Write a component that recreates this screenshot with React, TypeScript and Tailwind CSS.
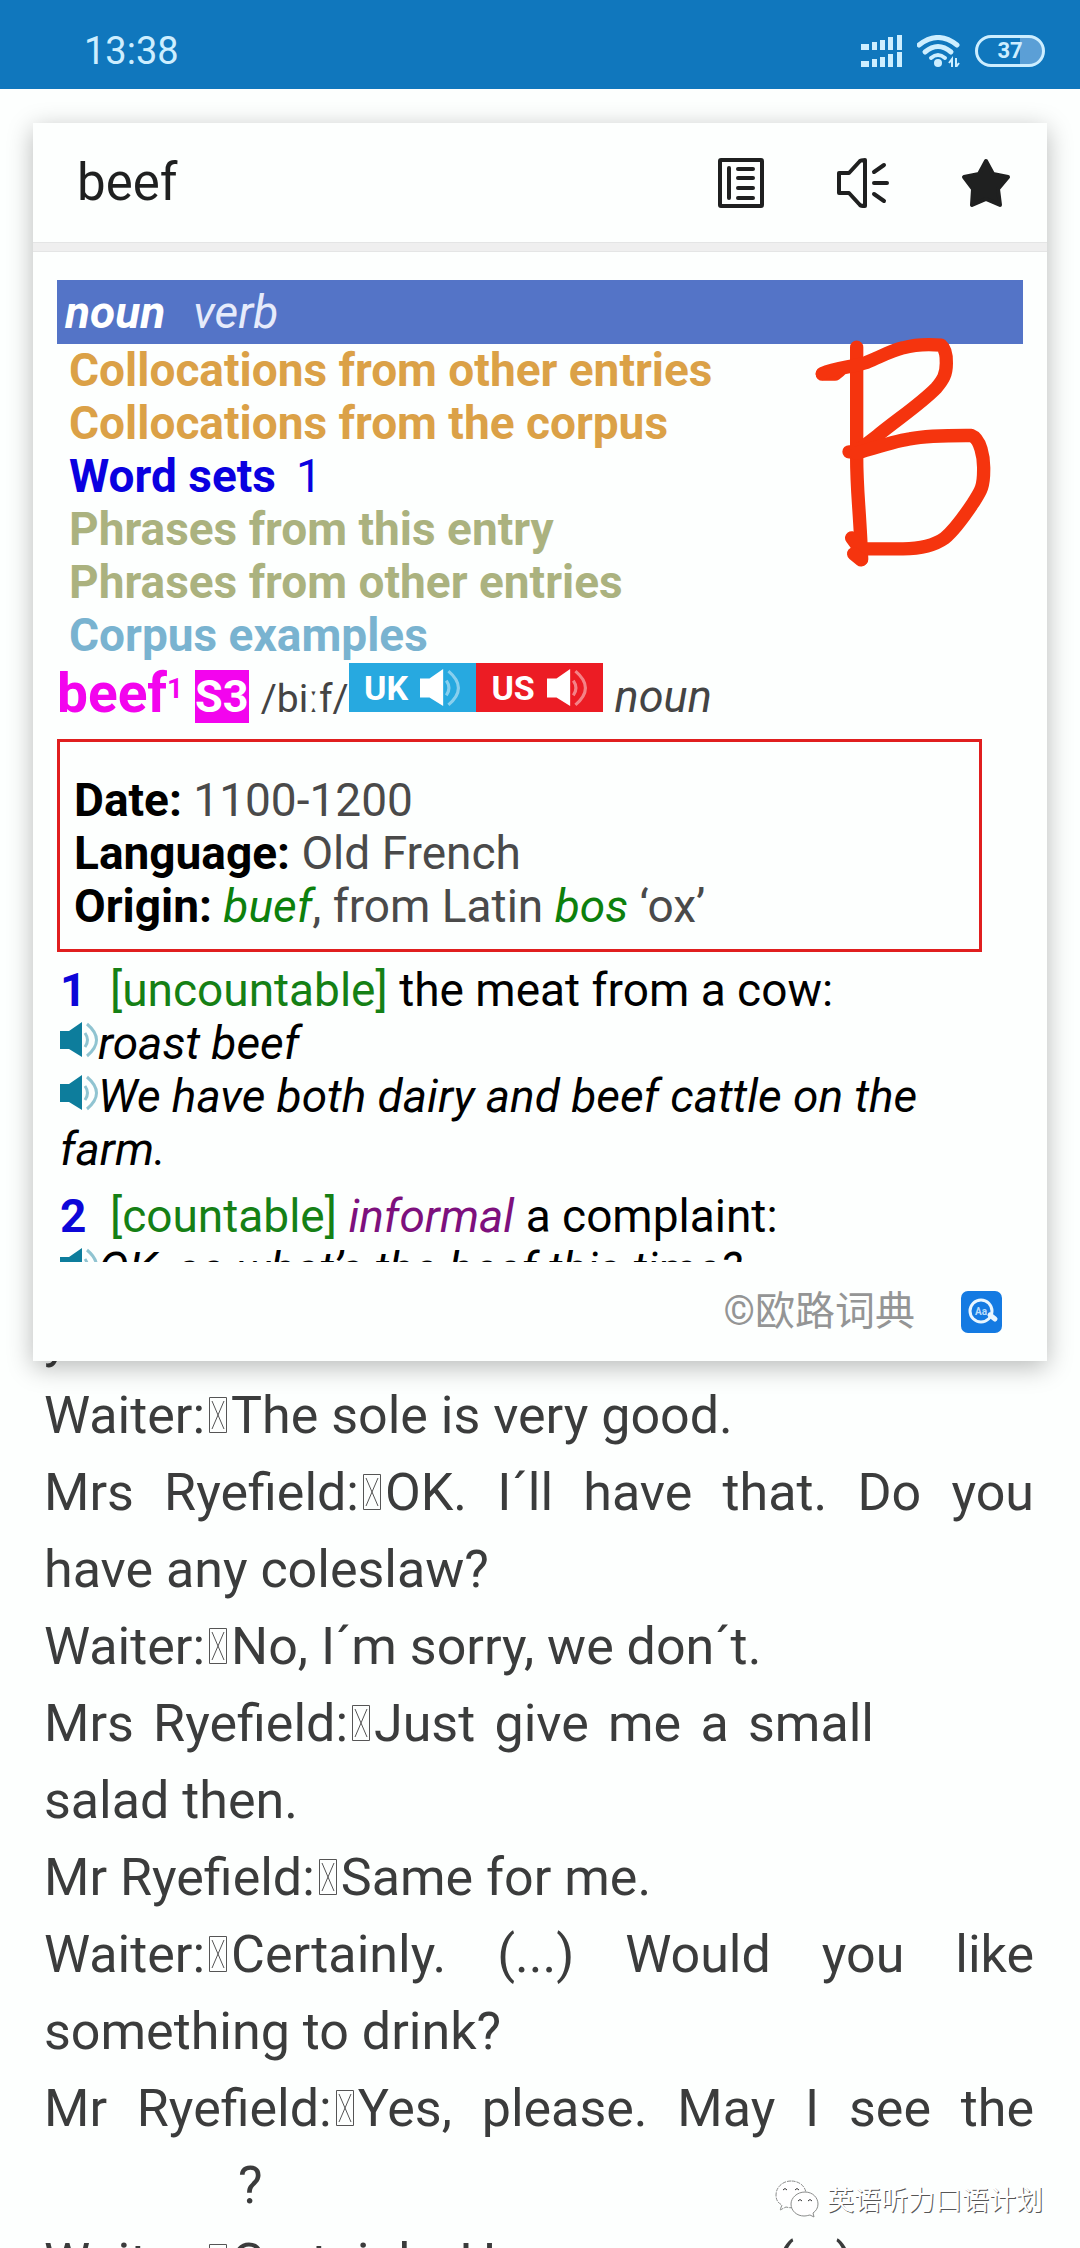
import type { ReactNode } from "react";

// ── Data ─────────────────────────────────────────────
const SECTION_LINKS = [
  { label: "Collocations from other entries", color: "text-[#dba147]" },
  { label: "Collocations from the corpus", color: "text-[#dba147]" },
  { label: "Word sets", color: "text-[#0a00e0]", count: 1 },
  { label: "Phrases from this entry", color: "text-[#abb27f]" },
  { label: "Phrases from other entries", color: "text-[#abb27f]" },
  { label: "Corpus examples", color: "text-[#79b3d0]" },
];

interface Line {
  speaker?: string;
  text: string;
  justify?: "full" | "short";
}

const DIALOGUE: Line[] = [
  { text: "y" },
  { speaker: "Waiter:", text: "The sole is very good." },
  { speaker: "Mrs Ryefield:", text: "OK. I´ll have that. Do you", justify: "full" },
  { text: "have any coleslaw?" },
  { speaker: "Waiter:", text: "No, I´m sorry, we don´t." },
  { speaker: "Mrs Ryefield:", text: "Just give me a small", justify: "short" },
  { text: "salad then." },
  { speaker: "Mr Ryefield:", text: "Same for me." },
  { speaker: "Waiter:", text: "Certainly. (...) Would you like", justify: "full" },
  { text: "something to drink?" },
  { speaker: "Mr Ryefield:", text: "Yes, please. May I see the", justify: "full" },
];

// ── Icons ────────────────────────────────────────────
function SignalIcon() {
  const bars = [
    { x: 0, w: 8, h: 6 },
    { x: 11, w: 5, h: 8 },
    { x: 19, w: 5, h: 10 },
    { x: 27, w: 5, h: 13 },
    { x: 36, w: 5, h: 15 },
  ];
  return (
    <svg className="h-8 w-[41px]" viewBox="0 0 41 32" fill="currentColor">
      {bars.map((b) => (
        <g key={b.x}>
          <rect x={b.x} y={15 - b.h} width={b.w} height={b.h} />
          <rect x={b.x} y={32 - b.h} width={b.w} height={b.h} />
        </g>
      ))}
    </svg>
  );
}

function WifiIcon() {
  return (
    <svg className="h-8 w-[43px]" viewBox="0 0 43 32" fill="none" stroke="currentColor">
      <path d="M2 10 Q21 -5 40 10" strokeWidth="5" strokeLinecap="round" />
      <path d="M8 17 Q21 6 34 17" strokeWidth="5" strokeLinecap="round" />
      <path d="M14 23 Q21 17 28 23" strokeWidth="4" strokeLinecap="round" />
      <circle cx="21" cy="28" r="4" fill="currentColor" stroke="none" />
      <path d="M35 33 V24 L32 28 M39 23 V32 L42 28" strokeWidth="2" />
    </svg>
  );
}

function BookIcon() {
  return (
    <svg className="h-[50px] w-[46px]" viewBox="0 0 46 50" fill="none" stroke="currentColor">
      <rect x="2" y="2" width="42" height="46" rx="1" strokeWidth="4" />
      <path d="M11 10 V40" strokeWidth="4" strokeLinecap="round" />
      <path
        d="M20 11 H35 M20 20 H35 M20 30 H35 M20 40 H35"
        strokeWidth="4"
        strokeLinecap="round"
      />
    </svg>
  );
}

function SpeakIcon() {
  return (
    <svg
      className="h-[50px] w-[53px]"
      viewBox="0 0 53 50"
      fill="none"
      stroke="currentColor"
      strokeWidth="4"
      strokeLinejoin="round"
      strokeLinecap="round"
    >
      <path d="M3 15 H13 L24 3 Q25 2 29 2 V48 Q25 48 24 47 L13 35 H3 Z" />
      <path d="M38 14 L48 7 M38 25 H51 M38 36 L48 43" />
    </svg>
  );
}

function StarIcon() {
  return (
    <svg
      className="h-[50px] w-[50px]"
      viewBox="0 0 50 50"
      fill="currentColor"
      stroke="currentColor"
      strokeWidth="4"
      strokeLinejoin="round"
    >
      <path d="M25 3 L32 16 L47 19 L37 31 L39 47 L25 41 L11 47 L12 31 L3 19 L18 16 Z" />
    </svg>
  );
}

function SoundIcon({ className }: { className: string }) {
  return (
    <svg className={className} viewBox="0 0 38 38">
      <path d="M0 10 H9 L22 1 V36 L9 28 H0 Z" fill="currentColor" />
      <g fill="none" stroke="currentColor" opacity="0.45">
        <path d="M25 12 Q30 19 25 26" strokeWidth="3" />
        <path d="M27 3 Q46 19 27 35" strokeWidth="3" />
      </g>
    </svg>
  );
}

function DictLogo() {
  return (
    <svg className="size-[42px]" viewBox="0 0 42 42">
      <rect width="41" height="42" rx="7" fill="#147ae2" />
      <circle cx="20" cy="20" r="11" fill="none" stroke="#e9f6ff" strokeWidth="3" />
      <path d="M29 24 L34 28" stroke="#e9f6ff" strokeWidth="5" strokeLinecap="round" />
      <text
        x="20"
        y="24"
        fontSize="10"
        fontWeight="700"
        fontFamily="Roboto, sans-serif"
        textAnchor="middle"
        fill="#b9dcfb"
      >
        Aa
      </text>
    </svg>
  );
}

function WechatIcon() {
  return (
    <svg
      className="h-[38px] w-[44px]"
      viewBox="0 0 44 38"
      fill="#fff"
      stroke="#8a8c8b"
      strokeWidth="1"
      strokeLinejoin="round"
    >
      <path
        d="M16 1 C8 1 1 7 1 15 C1 20 3 23 7 25 L5 30 L11 27 C15 28 17 28 19 27 L31 13 C30 5 23 1 16 1 Z"
        strokeDasharray="4 1"
      />
      <path d="M30 12 C22 12 16 18 16 24 C16 31 22 36 29 36 C32 36 34 35 35 35 L39 37 L38 33 C41 31 43 28 43 24 C43 18 38 12 30 12 Z" />
      <path
        d="M8 10 q2 -3 4 0 M20 10 q2 -3 4 0 M23 21 q2 -3 4 0 M33 21 q2 -3 4 0"
        fill="none"
        stroke="#333"
      />
    </svg>
  );
}

// Box shown where the ebook has a character the font lacks
function MissingGlyph() {
  return (
    <svg
      className="mx-1 inline-block h-9 w-[18px] align-baseline"
      viewBox="0 0 18 36"
      fill="none"
      stroke="#555"
      strokeWidth="1"
      aria-hidden="true"
    >
      <path d="M0.5 0.5 H17.5 V35.5 H0.5 Z M3 4 L15 32 M15 4 L3 32" />
    </svg>
  );
}

function Scribble() {
  return (
    <svg
      className="pointer-events-none absolute right-[54px] top-[210px] h-[237px] w-[180px]"
      viewBox="160 100 540 710"
      fill="none"
      stroke="#f5340e"
      strokeWidth="40"
      strokeLinecap="round"
      strokeLinejoin="round"
      aria-hidden="true"
    >
      <path d="M291 142 V470 C291 560 297 600 303 715 L306 778" />
      <path d="M188 223 H226 L240 212" />
      <path d="M188 221 C230 202 280 202 320 188 C360 172 395 152 430 144 C470 133 510 133 544 136 Q561 150 560 190 C560 225 550 240 530 264 C480 315 410 360 350 410 L290 456 H268" />
      <path d="M290 460 C340 445 400 425 450 417 C510 406 580 407 635 407 C662 417 673 470 672 510 C672 565 662 575 640 610 C610 655 585 690 555 715 C520 740 480 747 430 747 H300 L276 714" />
      <path d="M282 762 L304 780" />
    </svg>
  );
}

// ── Dictionary popup ─────────────────────────────────
function AccentButton({ label, className }: { label: string; className: string }) {
  return (
    <button
      type="button"
      className={`flex h-[49px] w-[127px] items-center justify-center gap-3 text-[34px] font-bold leading-none text-white ${className}`}
    >
      {label}
      <SoundIcon className="size-10" />
    </button>
  );
}

function Sense({ num, children }: { num: number; children: ReactNode }) {
  return (
    <p>
      <b className="mr-[26px] inline-block w-6 text-center text-[#0d06d8]">{num}</b>
      {children}
    </p>
  );
}

function Example({ children }: { children: ReactNode }) {
  return (
    <p className="italic">
      <button type="button" aria-label="Play example" className="align-baseline">
        <SoundIcon className="size-[38px] text-[#0d7d9c]" />
      </button>
      {children}
    </p>
  );
}

function DictionaryCard() {
  return (
    <section className="relative z-10 mx-[33px] mt-[34px] bg-[#fdfffe] shadow-[0_6px_24px_rgba(0,0,0,0.28)]">
      {/* Header */}
      <header className="flex h-[119px] items-center justify-between pl-11 pr-9 text-[#1f2020]">
        <h1 className="text-[51px] leading-none">beef</h1>
        <div className="flex items-center gap-[72px]">
          <button type="button" aria-label="Entry list">
            <BookIcon />
          </button>
          <button type="button" aria-label="Pronounce">
            <SpeakIcon />
          </button>
          <button type="button" aria-label="Favourite">
            <StarIcon />
          </button>
        </div>
      </header>
      <div className="h-[10px] border-y border-[#e4e5e5] bg-[#efefef]" />

      {/* Entry */}
      <div className="max-h-[1010px] overflow-hidden px-6 pt-7 text-[46px] leading-[53px] text-black">
        <nav className="flex h-16 items-center gap-7 bg-[#5474c7] pl-2 italic text-white">
          <a href="#noun" className="font-bold">
            noun
          </a>
          <a href="#verb" className="text-[#e6ebfb]">
            verb
          </a>
        </nav>
        <ul className="pl-3">
          {SECTION_LINKS.map((link) => (
            <li key={link.label} className={link.color}>
              <a href="#section" className="font-bold">
                {link.label}
              </a>
              {link.count && <span className="ml-5">{link.count}</span>}
            </li>
          ))}
        </ul>

        <div className="flex h-[62px] items-baseline text-[#444]">
          <h2 className="text-[55px] font-bold leading-[62px] text-[#f304ee]">beef</h2>
          <sup className="mr-3 text-[28px] font-bold text-[#f304ee]">1</sup>
          <span className="mr-3 bg-[#f304ee] text-[45px] font-bold leading-[53px] text-white">
            S3
          </span>
          <span className="text-[39px]">/biːf/</span>
          <div className="flex self-start pt-px">
            <AccentButton label="UK" className="bg-[#27a9e0]" />
            <AccentButton label="US" className="bg-[#ec1c24]" />
          </div>
          <i className="ml-3 text-[45px]">noun</i>
        </div>

        <div className="mr-[41px] mt-[15px] border-3 border-[#e01f1f] px-[14px] pb-4 pt-8 text-[#4a4a4a]">
          <p>
            <b className="text-black">Date:</b> 1100-1200
          </p>
          <p>
            <b className="text-black">Language:</b> Old French
          </p>
          <p>
            <b className="text-black">Origin:</b> <i className="text-[#0c800c]">buef</i>, from Latin{" "}
            <i className="text-[#0c800c]">bos</i> ‘ox’
          </p>
        </div>

        <div className="mt-3 pl-[3px]">
          <Sense num={1}>
            <span className="text-[#158015]">[uncountable]</span> the meat from a cow:
          </Sense>
          <Example>roast beef</Example>
          <Example>We have both dairy and beef cattle on the farm.</Example>
        </div>
        <div className="mt-[14px] pl-[3px]">
          <Sense num={2}>
            <span className="text-[#158015]">[countable]</span>{" "}
            <i className="text-[#7d107d]">informal</i> a complaint:
          </Sense>
          <Example>OK, so what’s the beef this time?</Example>
        </div>
      </div>

      {/* Source */}
      <footer className="flex h-[99px] items-center justify-end gap-[46px] pr-11">
        <span className="font-[Roboto,'Noto_Sans_CJK_SC',sans-serif] text-[40px] leading-none text-[#949595]">
          ©欧路词典
        </span>
        <DictLogo />
      </footer>

      <Scribble />
    </section>
  );
}

// ── Page ─────────────────────────────────────────────
function StatusBar() {
  return (
    <div className="flex h-[89px] items-center justify-between bg-[#1077bd] pl-[84px] pr-[35px] pt-3 text-[#cdeeff]">
      <time className="text-[38px] leading-none">13:38</time>
      <div className="flex items-center gap-[15px]">
        <SignalIcon />
        <WifiIcon />
        <span className="flex h-8 w-[70px] items-center justify-center rounded-full border-3 border-current bg-linear-to-r from-transparent from-65% to-[#5b9fd6] to-65% text-[22px] font-bold leading-none">
          37
        </span>
      </div>
    </div>
  );
}

function DialogueLine({ line }: { line: Line }) {
  const align =
    line.justify === "full"
      ? "[text-align-last:justify]"
      : line.justify === "short"
        ? "mr-[160px] [text-align-last:justify]"
        : "";
  return (
    <p className={align}>
      {line.speaker}
      {line.speaker && <MissingGlyph />}
      {line.text}
    </p>
  );
}

export default function App() {
  return (
    <div className="relative h-screen overflow-hidden bg-[#fdfffe] font-[Roboto,'Noto_Sans_CJK_SC',sans-serif]">
      <StatusBar />
      <DictionaryCard />

      <main className="-mt-[61px] pl-11 pr-[46px] text-[52px] leading-[77px] text-[#3b3c3c]">
        {DIALOGUE.map((line) => (
          <DialogueLine key={line.text} line={line} />
        ))}
        <p className="pl-[194px]">?</p>
        <DialogueLine line={{ speaker: "Waiter:", text: "Certainly. Here you are. (...)" }} />
      </main>

      {/* Watermark */}
      <div className="absolute bottom-7 right-[37px] flex items-center gap-2 font-['Noto_Sans_CJK_SC',sans-serif]">
        <WechatIcon />
        <span className="text-[27px] leading-[42px] text-white [text-shadow:1px_1px_0_#555]">
          英语听力口语计划
        </span>
      </div>
    </div>
  );
}
